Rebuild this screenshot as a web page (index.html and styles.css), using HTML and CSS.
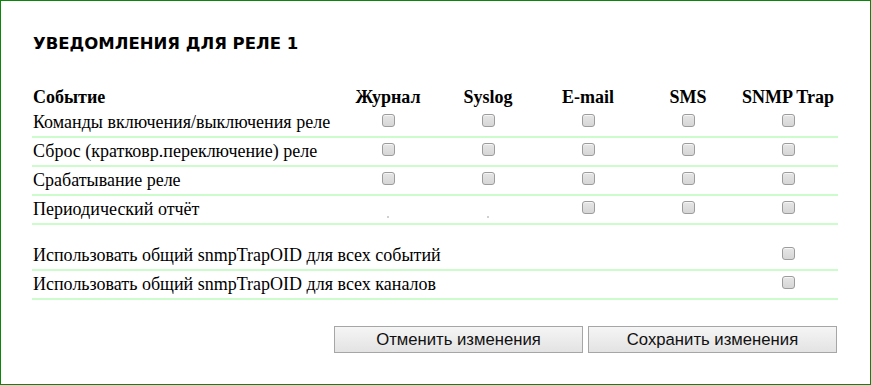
FILE: index.html
```html
<!DOCTYPE html>
<html lang="ru">
<head>
<meta charset="utf-8">
<title>Уведомления для реле 1</title>
<link rel="stylesheet" href="styles.css">
</head>
<body>
<div class="frame">
  <h1 class="title">УВЕДОМЛЕНИЯ ДЛЯ РЕЛЕ 1</h1>
  <table class="notif">
    <colgroup>
      <col class="c-event">
      <col class="c-ch"><col class="c-ch"><col class="c-ch"><col class="c-ch"><col class="c-ch">
    </colgroup>
    <thead>
      <tr class="head">
        <th class="ev">Событие</th>
        <th>Журнал</th>
        <th>Syslog</th>
        <th>E-mail</th>
        <th>SMS</th>
        <th>SNMP Trap</th>
      </tr>
    </thead>
    <tbody>
      <tr class="row">
        <td class="ev">Команды включения/выключения реле</td>
        <td><input type="checkbox" class="cb"></td>
        <td><input type="checkbox" class="cb"></td>
        <td><input type="checkbox" class="cb"></td>
        <td><input type="checkbox" class="cb"></td>
        <td><input type="checkbox" class="cb"></td>
      </tr>
      <tr class="row">
        <td class="ev">Сброс (кратковр.переключение) реле</td>
        <td><input type="checkbox" class="cb"></td>
        <td><input type="checkbox" class="cb"></td>
        <td><input type="checkbox" class="cb"></td>
        <td><input type="checkbox" class="cb"></td>
        <td><input type="checkbox" class="cb"></td>
      </tr>
      <tr class="row">
        <td class="ev">Срабатывание реле</td>
        <td><input type="checkbox" class="cb"></td>
        <td><input type="checkbox" class="cb"></td>
        <td><input type="checkbox" class="cb"></td>
        <td><input type="checkbox" class="cb"></td>
        <td><input type="checkbox" class="cb"></td>
      </tr>
      <tr class="row">
        <td class="ev">Периодический отчёт</td>
        <td class="na"><span class="dot"></span></td>
        <td class="na"><span class="dot"></span></td>
        <td><input type="checkbox" class="cb"></td>
        <td><input type="checkbox" class="cb"></td>
        <td><input type="checkbox" class="cb"></td>
      </tr>
      <tr class="spacer"><td colspan="6"></td></tr>
      <tr class="row">
        <td class="ev" colspan="5">Использовать общий snmpTrapOID для всех событий</td>
        <td><input type="checkbox" class="cb"></td>
      </tr>
      <tr class="row">
        <td class="ev" colspan="5">Использовать общий snmpTrapOID для всех каналов</td>
        <td><input type="checkbox" class="cb"></td>
      </tr>
    </tbody>
  </table>
  <div class="actions">
    <button class="btn" type="button">Отменить изменения</button>
    <button class="btn" type="button">Сохранить изменения</button>
  </div>
</div>
</body>
</html>
```

FILE: styles.css
```css
html, body {
  margin: 0;
  padding: 0;
  background: #ffffff;
}

.frame {
  box-sizing: border-box;
  width: 871px;
  height: 385px;
  border: 1px solid #0a870a;
  padding: 33px 0 0 31px;
  font-family: "Liberation Serif", "Times New Roman", serif;
  font-size: 18px;
  color: #000;
}

.title {
  margin: 0 0 32px 1px;
  font-family: "DejaVu Sans", Verdana, sans-serif;
  font-weight: bold;
  font-size: 16.5px;
  line-height: 20px;
  color: #000;
}

.notif {
  border-collapse: separate;
  border-spacing: 0;
  table-layout: fixed;
  width: 806px;
}

.c-event { width: 306px; }
.c-ch { width: 100px; }

.notif th,
.notif td {
  padding: 1px;
  text-align: center;
  vertical-align: middle;
}

.notif .ev {
  text-align: left;
}

.head th {
  height: 20px;
  vertical-align: bottom;
  font-weight: bold;
  white-space: nowrap;
}

.row td {
  height: 25px;
  border-bottom: 2px solid #ccfccc;
  white-space: nowrap;
}

.spacer td {
  height: 15px;
  padding: 1px;
}

.cb {
  -webkit-appearance: none;
  appearance: none;
  box-sizing: border-box;
  width: 13px;
  height: 13px;
  margin: 3px 3px 3px 4px;
  border: 1px solid #9c9c9c;
  border-radius: 3px;
  background: linear-gradient(#e6e6e6, #d6d6d6);
  box-shadow: inset 0 1px 0 rgba(255, 255, 255, 0.6);
  vertical-align: baseline;
}

.dot {
  display: inline-block;
  width: 2px;
  height: 2px;
  background: #d0d0d0;
  vertical-align: -3px;
}

.actions {
  display: flex;
  justify-content: flex-end;
  gap: 5px;
  width: 806px;
  padding-right: 1px;
  box-sizing: border-box;
  margin-top: 26px;
}

.btn {
  box-sizing: border-box;
  width: 249px;
  height: 27px;
  padding: 0;
  border: 1px solid #a6a6a6;
  border-radius: 0;
  background: linear-gradient(#f5f5f5, #e3e3e3);
  font-family: "Liberation Sans", Arial, sans-serif;
  font-size: 16.7px;
  color: #111;
}
```
